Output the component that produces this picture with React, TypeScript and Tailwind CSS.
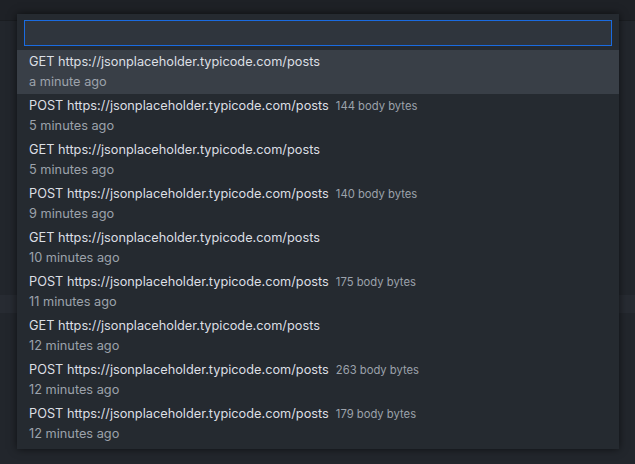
import React from 'react';

interface HistoryItem {
  method: string;
  url: string;
  bytes?: number;
  when: string;
}

const items: HistoryItem[] = [
  { method: 'GET', url: 'https://jsonplaceholder.typicode.com/posts', when: 'a minute ago' },
  { method: 'POST', url: 'https://jsonplaceholder.typicode.com/posts', bytes: 144, when: '5 minutes ago' },
  { method: 'GET', url: 'https://jsonplaceholder.typicode.com/posts', when: '5 minutes ago' },
  { method: 'POST', url: 'https://jsonplaceholder.typicode.com/posts', bytes: 140, when: '9 minutes ago' },
  { method: 'GET', url: 'https://jsonplaceholder.typicode.com/posts', when: '10 minutes ago' },
  { method: 'POST', url: 'https://jsonplaceholder.typicode.com/posts', bytes: 175, when: '11 minutes ago' },
  { method: 'GET', url: 'https://jsonplaceholder.typicode.com/posts', when: '12 minutes ago' },
  { method: 'POST', url: 'https://jsonplaceholder.typicode.com/posts', bytes: 263, when: '12 minutes ago' },
  { method: 'POST', url: 'https://jsonplaceholder.typicode.com/posts', bytes: 179, when: '12 minutes ago' },
];

const App: React.FC = () => {
  return (
    <div
      className="relative w-[635px] h-[464px] overflow-hidden bg-[#22262c]"
      style={{ fontFamily: 'Inter, "Liberation Sans", Arial, sans-serif' }}
    >
      {/* editor chrome behind the picker */}
      <div className="h-[21px] bg-[#1e2126] border-b border-[#1a1d21]"></div>
      <div className="h-[274px]"></div>
      <div className="h-[18px] bg-[#272b32]"></div>

      {/* quick pick */}
      <div className="absolute left-[17px] top-[14px] w-[602px] bg-[#252a30] shadow-[0_0_8px_rgba(0,0,0,0.6)] pb-[3px]">
        <div className="px-[7px] pt-[6px] pb-[4px]">
          <div className="h-[26px] bg-[#2f353d] border border-[#1a6be0]"></div>
        </div>
        {items.map((item, i) => (
          <div
            key={i}
            className={`h-[44px] pl-[12px] pt-[2px] text-[12.75px] leading-[20px] ${i === 0 ? 'bg-[#393f47]' : ''}`}
          >
            <div className="flex items-baseline text-[#dcdfe4]">
              <span>
                {item.method} {item.url}
              </span>
              {item.bytes !== undefined && (
                <span className="ml-[7px] text-[11.25px] text-[#9ca2ab]">{item.bytes} body bytes</span>
              )}
            </div>
            <div className="text-[#9ca2ab]">{item.when}</div>
          </div>
        ))}
      </div>
    </div>
  );
};

export default App;
